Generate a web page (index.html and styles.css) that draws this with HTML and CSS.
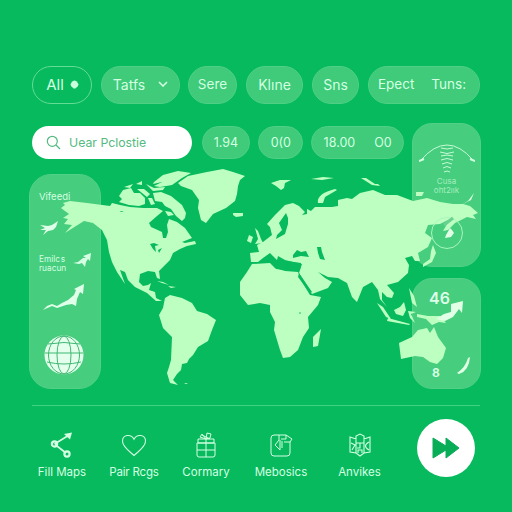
FILE: index.html
```html
<!DOCTYPE html>
<html lang="en">
<head>
<meta charset="utf-8">
<title>World map</title>
<link rel="stylesheet" href="styles.css">
</head>
<body>
<div class="app">
  <header class="filters">
    <button class="pill outline all">All <i class="dot"></i></button>
    <button class="pill tatfs">Tatfs
      <svg width="10" height="6" viewBox="0 0 10 6" fill="none" stroke="currentColor" stroke-width="1.6"><path d="M1 1l4 4 4-4"/></svg>
    </button>
    <button class="pill sere">Sere</button>
    <button class="pill kline">Klıne</button>
    <button class="pill sns">Sns</button>
    <button class="pill epect"><span>Epect</span><span>Tuns:</span></button>
  </header>

  <main class="board">
    <section class="left">
      <div class="row">
        <label class="search">
          <svg width="15" height="15" viewBox="0 0 15 15" fill="none" stroke="currentColor" stroke-width="1.2"><circle cx="6.3" cy="6.3" r="5"/><path d="M10 10l4 4"/></svg>
          <span>Uear Pclostie</span>
        </label>
        <span class="chip c1">1.94</span>
        <span class="chip c2">0(0</span>
        <span class="chip c3"><span>18.00</span><span>O0</span></span>
      </div>
      <aside class="panel side">
        <span class="side-title">Vifeedi</span>
        <svg class="bird" width="20" height="15" viewBox="0 0 20 15" fill="currentColor"><path d="M0 4l8 1 4-1 6-4-2 6-3 3-5 1-5 4 3-5-6 0 5-2z"/></svg>
        <div class="trend">
          <span>Emilc&#8202;s<br>ruacun</span>
          <svg width="19" height="15" viewBox="0 0 19 15" fill="currentColor"><path d="M0 10l5-1 5-4 3 0-3-2 8-3-1 8-2-2-2 3-1 5-3-4-3 1z"/></svg>
        </div>
        <svg class="growth" width="44" height="27" viewBox="0 0 44 27" fill="currentColor"><path d="M0 26l4-4 5-2 5 2 5-3 6-3 6-5 2-5-2-1 10-5-1 10-3-2-3 7-1 7-4-2-6 1-9 3-5-2z"/></svg>
        <svg class="globe" width="40" height="40" viewBox="0 0 40 40"><circle cx="20" cy="20" r="19.5" fill="#e4ffec"/><g fill="none" stroke="#3fb972" stroke-width="1"><ellipse cx="20" cy="20" rx="7" ry="19"/><ellipse cx="20" cy="20" rx="15.5" ry="19"/><path d="M4 9q16-3 32 0M1 18h38M3 27q17 4 34 0"/></g></svg>
      </aside>
    </section>
    <section class="right">
      <aside class="panel radar">
        <svg width="56" height="34" viewBox="0 0 56 34" fill="none" stroke="currentColor" stroke-width=".9"><path d="M2 17Q28-13 54 17"/><path d="M22 5q6 2 12 0M21 9q7 3 14 0M22 13q6-2 12 0M22 17q6-3 12 0M23 21q5-3 10 0M24 25q4-3 8 0M25 29q3-2 6 0"/><path d="M0 18l5-2M51 16l5 2" stroke-width="2"/></svg>
        <span>Cusa<br>oht2ıık</span>
      </aside>
      <aside class="panel score">
        <strong>46</strong>
        <b>8</b>
      </aside>
    </section>
  </main>

  <footer class="nav">
    <a class="n1"><svg width="24" height="26" viewBox="0 0 24 26" fill="none" stroke="currentColor" stroke-width="1.6"><path d="M4.500 12L20 2.500M5 12.500L16 21"/><circle cx="4.500" cy="12" r="2.600" stroke-width="2.200"/><circle cx="17" cy="22" r="2.600" stroke-width="2.200"/><path d="M14 2l8-1.500-2 7z" fill="currentColor" stroke="none"/></svg><span>Fill Maps</span></a>
    <a class="n2"><svg width="26" height="26" viewBox="0 0 26 26" fill="none" stroke="currentColor" stroke-width="1.100"><path d="M13 23.500C8 19 1.500 14.500 1.500 9.200C1.500 2.500 10 1.500 13 7.200C16 1.500 24.500 2.500 24.500 9.200C24.500 14.500 18 19 13 23.500z"/></svg><span>Pair Rcgs</span></a>
    <a class="n3"><svg width="22" height="26" viewBox="0 0 22 26" fill="none" stroke="currentColor" stroke-width="1"><path d="M3 7h16M3 7v4h16V7M2 11h18v12q0 2-2 2H4q-2 0-2-2zM11 7v18M2 18h18M11 7L5 5l2-3 4 5 1-6 4 1-1 4zM7 3l8 4"/></svg><span>Cormary</span></a>
    <a class="n4"><svg width="24" height="26" viewBox="0 0 24 26" fill="none" stroke="currentColor" stroke-width="1"><path d="M17 3H5Q2 3 2 6v15q0 3 3 3h13q3 0 3-3V10M10 3v5l-4 5 5 5V8M13 9v7M17 3v4h-5M17 3l6 4-2 3h-6"/></svg><span>Mebosics</span></a>
    <a class="n5"><svg width="24" height="26" viewBox="0 0 24 26" fill="none" stroke="currentColor" stroke-width="1.100"><path d="M2 5l6 2V4l4-2 4 2v3l6-2v15l-6 1-4 3-4-3-6-1zM8 7v4h8V7M8 11v10M16 11v10M3 11l4 2-3 5M12 11v5h-3M10 21v-3h4v3M21 10q-7 4 0 8"/></svg><span>Anvikes</span></a>
    <button class="go"><svg width="28" height="22" viewBox="0 0 28 22" fill="currentColor"><path d="M1 1l13 8V1l13 10-13 10v-8L1 21z" stroke="currentColor" stroke-linejoin="round"/></svg></button>
  </footer>

  <svg class="world" width="512" height="512" viewBox="0 0 512 512">
    <g class="land">
      <!-- North America -->
      <path d="M61 208L65 205L63 203L70 201L87 203L110 206L112 203L120 205L130 207L143 208L157 208L163 211L157 216L149 223L151 227L162 232L163 238L166 238L168 232L167 225L169 219L177 222L185 228L192 238L182 242L185 243L195 241L196 244L187 246L180 249L173 253L170 260L165 265L159 271L160 279L157 278L155 272L148 271L140 274L139 282L143 286L148 285L151 283L149 290L155 292L156 298L162 301L156 301L147 293L135 287L128 280L125 272L120 270L125 284L117 272L112 262L109 252L107 240L102 230L93 223L84 221L76 226L65 233L72 225L64 224L68 219L63 218L69 214Z"/>
      <path d="M157 281l6 1 6 3-7-2zM168 286l8 1-5 1z"/>
      <path d="M119 196l4-6 8-2 3 5 6 0 5 5 0 6-6 2-10-1-10-3 3-3zM124 187l9-3-3 4zM136 184l6-3 0 4zM137 189l7 0 6 5-3 3-5-4zM146 184l8 4 11-1-2 3-10 1z"/>
      <path d="M154 182l9-7 15-4 13 2-9 5-10 7-12 2-6-1 8-4-9 2zM153 193l8-1 10 4 11 9 4 8-1 5-3 3-6-5-5-7-6-3-3-4-7-1zM165 211l6 1 3 3-6 1zM148 198l4 0 3 6-4 1z"/>
      <path d="M178 183l10-7 19-4 16-3 10 3 12 4-5 4-2 6-1 8-2 7-9 7-13 6-7 9-5-3-3-12 1-8-7-10-11-4zM233 213l10 0 0 3-7 1-3-2z"/>
      <!-- South America -->
      <path d="M165 298L170 295L182 298L192 303L197 311L207 314L216 320L212 330L208 341L198 347L193 355L189 359L187 363L182 364L181 370L177 374L173 380L178 385L170 383L167 373L169 367L171 360L172 337L163 328L159 315L163 308ZM184 383l4 0-2 1z"/>
      <!-- Africa -->
      <path d="M252 264l18-1 5 5 10 3 13 1 4 10 8 13 11 2-3 8-10 12 1 11-6 9-5 13-8 7-7 1-3-8-6-20 1-8-5-10v-7l-10-2-12 2-8-10v-13l7-10zM321 329l-3 17-5 1v-10z"/>
      <!-- Eurasia -->
      <path d="M267 224L275 215L285 205L293 203L299 206L305 212L302 215L307 214L307 209L311 211L315 207L332 207L338 206L338 200L347 198L352 199L360 193L373 190L385 195L397 195L413 201L427 198L440 202L453 204L463 204L470 206L478 213L473 215L476 219L467 217L455 223L448 230L443 231L450 219L440 224L428 225L425 233L432 238L428 247L418 253L420 261L415 261L412 256L405 258L409 265L408 273L398 282L387 285L394 293L392 298L387 297L382 292L382 300L387 307L380 299L378 290L372 282L363 287L357 302L352 297L347 283L338 278L328 277L318 272L325 278L332 282L328 288L312 294L305 283L299 273L302 264L293 262L285 260L278 256L277 260L270 253L263 258L258 262L251 262L250 253L259 252L257 245L263 242L272 235L270 227Z"/>
      <path d="M255 228l3 3 3 8 2 4-8 1 3-5zM249 235l4 2-2 6-4-2zM271 183l9-3 11 0-6 3-1 5-3 2-5-4zM318 203q-2-9 17-14l2 1-12 7-2 6zM311 179l12-2 11 1-12 2zM361 178l5 0 9 6 3 0 2 2-8-1z"/>
      <path d="M433 245l3 8-4 9-9 5 0-3 7-5 1-8zM416 192l8 0-2 4-6 0zM377 303l6 4 8 12-5-2zM388 318l22 6-1 1-22-4zM394 310l6-3 4-5 2 8-3 6-7-2z"/>
      <path d="M409 288l5 8 3 11-5-4zM408 311l8 1-5 2 4 9-5-5zM417 314l11 2 12 0 6 7-7-1-7 3-6-6-9-2z"/>
      <!-- Australia -->
      <path d="M399 343l13-6 6-7 9-2 3 5 4-6 4 10 8 11-3 10-6 6-7-2-7-5-8-1-14 3z"/>
    </g>
    <g class="sea">
      <path d="M286 213l-7 10 3 7-5 5-1 4 9-5 3-10 0-6zM293 255l4-5 4 2 5-1 3 6-8-1-8 2zM317 247l4 0 1 5 3 8-5-1-2-6zM271 262l8-1 6 3 1 6-10-1zM287 261l14 2-1 7-12-2zM299 273l13 19-2 1-12-16zM150 244l4-1 5 2-4 1 1 6-3-3zM158 250l4-2-3 5zM120 211l4 0-3 1z"/>
      <circle cx="300" cy="313" r=".8"/>
    </g>
    <g class="marks">
      <circle cx="447" cy="233" r="15.500" fill="none" stroke="#aaf5be"/>
      <path d="M446 235l4-7 2 2 2 3-3 4-6 1zM461 205l7-4 6-8-3 7zM451 304l12-3-1 12-3-4-6 8-8 4-9-2 8-5 7-2zM457 373q8-5 11-15l2-1q-1 14-11 17z"/>
      <path d="M444 225l9-7" stroke="#69d291" stroke-width="3"/>
    </g>
  </svg>
</div>
</body>
</html>
```
FILE: styles.css
```css
* { box-sizing: border-box; }
body { margin: 0; background: #08ba5e; }
button { font: inherit; color: inherit; border: 0; padding: 0; background: none; }
svg { display: block; flex: none; }

.app {
  position: relative;
  width: 512px;
  height: 512px;
  padding: 66px 32px 0;
  overflow: hidden;
  background: #08ba5e;
  color: #d4ffe2;
  font-family: Inter, "Liberation Sans", sans-serif;
}

.filters { display: flex; height: 38px; font-size: 14px; }
.pill {
  display: flex;
  align-items: center;
  justify-content: center;
  padding-bottom: 2px;
  border-radius: 19px;
  background: #3fcb79;
  border: 1px solid #4fd085;
  white-space: nowrap;
}
.outline { background: none; border-color: #63dc95; }
.all { width: 60px; margin-right: 9px; gap: 7px; font-size: 15px; }
.dot { width: 7px; height: 7px; border-radius: 2.5px; background: #c9ffdb; transform: rotate(45deg); }
.tatfs { width: 79px; margin-right: 8px; gap: 13px; }
.sere { width: 49px; margin-right: 9px; font-size: 13.5px; }
.kline { width: 57px; margin-right: 9px; }
.sns { width: 47px; margin-right: 9px; }
.epect { width: 112px; gap: 17px; padding-right: 4px; font-size: 13.5px; }

.board { display: flex; justify-content: space-between; margin: 19px -1px 0 -3px; height: 266px; }
.left { width: 375px; padding-top: 3px; }
.row { display: flex; height: 33px; margin-left: 3px; }
.search {
  display: flex;
  align-items: center;
  gap: 8px;
  width: 160px;
  padding-left: 14px;
  margin-right: 10px;
  border-radius: 17px;
  background: #fff;
  color: #55ba80;
  font-size: 12.3px;
}
.chip {
  display: flex;
  align-items: center;
  justify-content: center;
  border-radius: 17px;
  border: 1px solid #4fd085;
  background: #3fcb79;
  font-size: 12.5px;
}
.c1 { width: 49px; margin-right: 8px; }
.c2 { width: 45px; margin-right: 8px; }
.c3 { width: 93px; gap: 19px; }

.panel { border: 1px solid #51d186; background: #46cd7e; }
.side {
  display: flex;
  flex-direction: column;
  width: 72px;
  height: 215px;
  margin-top: 15px;
  padding: 15px 0 0 9px;
  border-radius: 22px;
}
.side-title { font-size: 9.5px; line-height: 13px; }
.bird { margin: 18px 0 0 1px; color: #dfffe8; }
.trend {
  display: flex;
  gap: 4px;
  margin-top: 17px;
  font-size: 8.3px;
  line-height: 9px;
}
.trend span { width: 30px; padding-top: 2px; white-space: nowrap; }
.growth { margin: 11px 0 0 4px; color: #dfffe8; }
.globe { margin: 24px 0 0 5px; }

.right { display: flex; flex-direction: column; gap: 11px; width: 69px; }
.radar {
  display: flex;
  flex-direction: column;
  align-items: center;
  height: 144px;
  padding-top: 19px;
  border-radius: 20px;
}
.radar span { font-size: 8px; line-height: 9px; text-align: center; color: #a5efbd; }
.score {
  display: flex;
  flex-direction: column;
  height: 111px;
  padding: 10px 0 0 16px;
  border-radius: 20px;
}
.score strong { font-size: 16px; line-height: 19px; font-weight: 600; color: #dfffe8; }
.score b { margin: 59px 0 0 3px; font-size: 12px; line-height: 12px; }

.nav {
  display: flex;
  align-items: flex-start;
  height: 90px;
  margin-top: 16px;
  border-top: 1px solid #3fd27f;
  font-size: 11.5px;
}
.nav a {
  display: flex;
  flex-direction: column;
  align-items: center;
  gap: 7px;
  padding-top: 26px;
  white-space: nowrap;
}
.nav a span { line-height: 14px; }
.n1 { width: 60px; }
.n2 { width: 84px; letter-spacing: -0.2px; }
.n3 { width: 60px; }
.n4 { width: 90px; }
.n5 { width: 67px; }
.go {
  display: flex;
  align-items: center;
  justify-content: center;
  flex: none;
  width: 58px;
  height: 58px;
  margin: 13px 0 0 24px;
  border-radius: 50%;
  background: #fff;
  color: #08ad58;
}

.world { position: absolute; left: 0; top: 0; pointer-events: none; }
.land { fill: #bdffc1; }
.sea { fill: #08ba5e; }
.marks { fill: #e1ffe5; }
```
